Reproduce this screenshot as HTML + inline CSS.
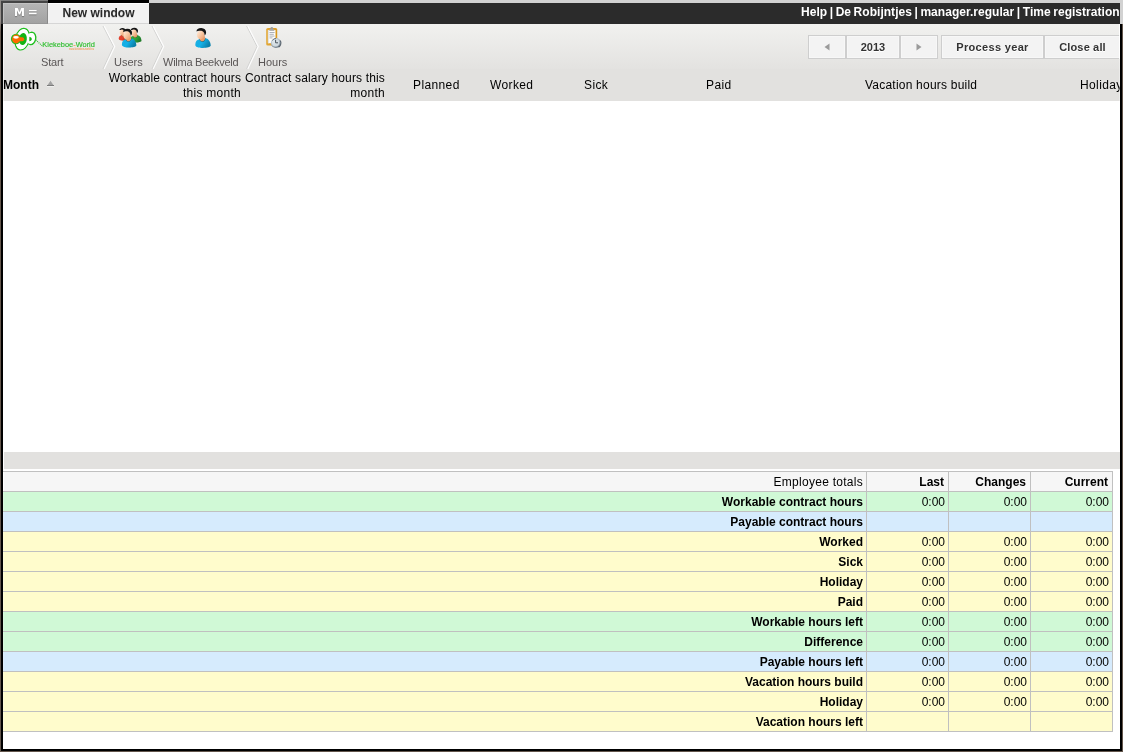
<!DOCTYPE html>
<html><head><meta charset="utf-8"><title>Hours</title>
<style>
html,body{margin:0;padding:0;}
body{width:1123px;height:752px;overflow:hidden;background:#fff;font-family:"Liberation Sans",Arial,sans-serif;font-size:12px;color:#000;position:relative;}
.abs{position:absolute;}
.crumb,.h,.h2,.btn,#tab,#mBtn,#topText,table{will-change:transform;}
#frameL0{left:0;top:0;width:1px;height:752px;background:linear-gradient(#8e8a86 0,#9a9490 20px,#6a5e54 32px,#63564c 110px,#63564c 100%);}
#frameL{left:1px;top:24px;width:2px;height:728px;background:#000;}
#frameR{left:1120px;top:24px;width:2px;height:728px;background:#000;}
#frameR0{left:1122px;top:24px;width:1px;height:728px;background:#63564c;}
#frameB{left:1px;top:749px;width:1121px;height:2px;background:#000;}
#frameB0{left:0;top:751px;width:1123px;height:1px;background:#63564c;}
#topGrey{left:149px;top:0;width:974px;height:24px;background:#d2d2d2;}
#topBar{left:149px;top:3px;width:971px;height:21px;background:#2b2b2b;}
#tabBlack{left:48px;top:0;width:101px;height:3px;background:#000;}
#mBorder{left:0;top:0;width:48px;height:24px;background:#444;}
#mTop{left:0;top:0;width:48px;height:1px;background:#7c7c7c;}
#mBtn{left:3px;top:3px;width:45px;height:21px;box-sizing:border-box;background:linear-gradient(#b6b6b6,#a2a2a2);border-right:1px solid #8a8a8a;border-bottom:1px solid #979797;box-shadow:inset 1px 1px 0 #c2c2c2;color:#fff;font-family:"DejaVu Sans","Liberation Sans",sans-serif;font-weight:bold;font-size:11px;line-height:20px;text-align:left;padding-left:11px;text-shadow:0 1px 1px #777;word-spacing:-1px;}
#tab{left:48px;top:3px;width:101px;height:21px;box-sizing:border-box;background:#f2f2f2;border-top:1px solid #fdfdfd;border-bottom:1px solid #d6d6d6;color:#2a2a2a;font-weight:bold;font-size:12px;line-height:18px;text-align:center;text-shadow:0 1px 0 #d8d8d8;}
#topText{right:3px;letter-spacing:0.03px;word-spacing:-0.8px;top:3px;height:21px;line-height:18px;color:#fff;font-weight:bold;font-size:12px;white-space:nowrap;}
#toolbar{left:3px;top:24px;width:1117px;height:46px;background:linear-gradient(#f1f1ef,#e3e2e0);}
#ghead{left:3px;top:69px;width:1117px;height:32px;background:#e2e1df;}
.crumb{top:55px;font-size:11px;color:#5a5656;white-space:nowrap;line-height:14px;}
.h{top:78px;line-height:14px;font-size:12px;white-space:nowrap;letter-spacing:0.38px;}
.h2{top:71px;line-height:15px;font-size:12px;text-align:right;}
.btn{top:35px;height:24px;border:1px solid #cecece;background:#f3f3f3;box-shadow:inset 0 0 0 1px #f7f7f7;font-weight:bold;font-size:11px;color:#333;text-align:center;line-height:22px;box-sizing:border-box;text-shadow:0 1px 0 #fff;white-space:nowrap;}
#band{left:4px;top:452px;width:1116px;height:17px;background:#e2e1df;}
table{position:absolute;left:3px;top:471px;width:1110px;border-collapse:collapse;table-layout:fixed;font-size:12px;}
td{border:1px solid #c0c0c0;height:17px;padding:2px 4px 0 0;text-align:right;line-height:17px;white-space:nowrap;overflow:hidden;}
td.l{font-weight:bold;border-left-color:#fff;padding-right:3px;}
tr.hd td{background:#f6f6f6;font-weight:bold;}
tr.hd td.l{font-weight:normal;letter-spacing:0.27px;}
tr.g td,tr.b td,tr.y td{padding-right:3px;}
tr.g td.l{border-left-color:#daf9df;}tr.b td.l{border-left-color:#deeefd;}tr.y td.l{border-left-color:#fffcd6;}
tr.g td{background:#d0f9d6;}
tr.b td{background:#d6ebfd;}
tr.y td{background:#fffccc;}
</style></head><body>
<div class="abs" id="topGrey"></div>
<div class="abs" id="topBar"></div>
<div class="abs" id="tabBlack"></div>
<div class="abs" id="mBorder"></div>
<div class="abs" id="mTop"></div>
<div class="abs" id="mBtn">M <span style="font-size:12px;line-height:0;position:relative;top:0.3px">=</span></div>
<div class="abs" id="tab">New window</div>
<div class="abs" id="topText">Help | De Robijntjes | manager.regular | Time registration</div>
<div class="abs" id="toolbar"></div>
<div class="abs" id="ghead"></div>

<svg class="abs" id="icons" style="left:0;top:0" width="320" height="72" viewBox="0 0 320 72">
<defs>
<linearGradient id="skin" x1="0" y1="0" x2="1" y2="1"><stop offset="0" stop-color="#fff1e6"/><stop offset="0.45" stop-color="#fbcdaa"/><stop offset="1" stop-color="#e79a68"/></linearGradient>
<linearGradient id="shade" x1="0" y1="0" x2="1" y2="0.4"><stop offset="0" stop-color="#fff" stop-opacity="0.12"/><stop offset="0.5" stop-color="#000" stop-opacity="0"/><stop offset="1" stop-color="#000" stop-opacity="0.28"/></linearGradient>
<linearGradient id="gold" x1="0" y1="0" x2="1" y2="0"><stop offset="0" stop-color="#e2a838"/><stop offset="1" stop-color="#d8981f"/></linearGradient>
<radialGradient id="clk" cx="0.4" cy="0.35" r="0.7"><stop offset="0" stop-color="#e6ecf0"/><stop offset="0.6" stop-color="#b2bec7"/><stop offset="1" stop-color="#5a6874"/></radialGradient>
<g id="person">
 <path d="M0.3 17 C0.4 13.5 1.6 12 4.2 11.3 L6.5 10.6 L10.8 10.3 C13.6 11 15.5 13.6 15.7 17.6 C15.6 19.2 11.5 20 8 20 C4.5 20 0.4 19.2 0.3 17 Z" fill="currentColor"/>
 <path d="M0.3 17 C0.4 13.5 1.6 12 4.2 11.3 L6.5 10.6 L10.8 10.3 C13.6 11 15.5 13.6 15.7 17.6 C15.6 19.2 11.5 20 8 20 C4.5 20 0.4 19.2 0.3 17 Z" fill="url(#shade)"/>
 <path d="M4.3 11.2 C5 13.4 6.5 14 7.6 13.9 C9 13.8 10.3 12.6 10.6 10.2 L9.6 9 L5 10 Z" fill="#3a3020" opacity="0.55"/>
 <path d="M4.8 9.5 L4.9 11.4 C5.6 13 6.6 13.4 7.5 13.3 C8.8 13.2 9.8 12.2 10.1 10.3 L9.6 7.5 Z" fill="#ea9e6c"/>
 <ellipse cx="5.6" cy="6.7" rx="3.7" ry="4.7" fill="url(#skin)"/>
 <path d="M1.5 3.4 C1.3 1.6 3.5 0 6.3 0.1 C9.3 0.2 11.2 2 11.1 4.6 C11 6 10.4 7 9.7 7.6 C9.6 6.2 9.2 4.9 8.5 4 C7.6 3 6.2 2.5 4.4 2.7 C3.2 2.8 2.2 3.1 1.5 3.4 Z" fill="#151515"/>
</g>
</defs>
<!-- chevrons -->
<g fill="none" stroke-linejoin="miter">
 <path d="M103 26 L113.5 46.5 L103 69" stroke="#d2d2d1" stroke-width="1"/>
 <path d="M104.2 26 L114.7 46.5 L104.2 69" stroke="#fdfdfd" stroke-width="1.15"/>
 <path d="M152 26 L162.5 46.5 L152 69" stroke="#d2d2d1" stroke-width="1"/>
 <path d="M153.2 26 L163.7 46.5 L153.2 69" stroke="#fdfdfd" stroke-width="1.15"/>
 <path d="M246.6 26 L257.1 46.5 L246.6 69" stroke="#d2d2d1" stroke-width="1"/>
 <path d="M247.8 26 L258.3 46.5 L247.8 69" stroke="#fdfdfd" stroke-width="1.15"/>
</g>
<!-- logo -->
<g>
 <ellipse cx="22.3" cy="39.2" rx="7" ry="10.9" transform="rotate(14 22.3 39.2)" fill="#fff" stroke="#1fbf1f" stroke-width="1.3"/>
 <ellipse cx="31.4" cy="38.4" rx="4.3" ry="6.2" transform="rotate(10 31.4 38.4)" fill="#fff" stroke="#1fbf1f" stroke-width="1.3"/>
 <ellipse cx="22.3" cy="39.2" rx="6.35" ry="10.25" transform="rotate(14 22.3 39.2)" fill="#fff"/>
 <ellipse cx="30.4" cy="38.4" rx="3.8" ry="5.5" transform="rotate(10 30.4 38.4)" fill="#fff"/>
 <ellipse cx="22.9" cy="39" rx="3.9" ry="6.1" transform="rotate(6 22.9 39)" fill="#14b414"/>
 <path d="M29.4 36.8 C31.2 37.2 31.9 38.2 31.8 39.3 C31.7 40.3 30.8 41 29.3 41.2 Z" fill="#14b414"/>
 <ellipse cx="16" cy="39" rx="5.1" ry="5.3" fill="#1fbf1f"/>
 <rect x="17" y="37.2" width="7.2" height="4" rx="2" fill="#ff6a00"/>
 <ellipse cx="16.1" cy="39" rx="4.1" ry="4.4" fill="#ff6a00"/>
 <ellipse cx="16" cy="37.3" rx="2.8" ry="1.4" fill="#fff"/>
 <path d="M35.8 40 L42.2 45.8" stroke="#2fc02f" stroke-width="1.1" stroke-dasharray="1 0.9" fill="none"/>
 <text x="42.3" y="47.1" font-family="Liberation Sans, sans-serif" font-size="7.6" fill="#2fbe2f" stroke="#2fbe2f" stroke-width="0.15" textLength="52.6" lengthAdjust="spacingAndGlyphs">Kiekeboe<tspan fill="#ff7a1a" stroke="#ff7a1a">-</tspan>World</text>
 <text x="69" y="50.3" font-family="Liberation Sans, sans-serif" font-size="2.6" fill="#f08a3c" textLength="25" lengthAdjust="spacingAndGlyphs">www.kiekeboe-world.nu</text>
</g>
<!-- users -->
<g>
 <use href="#person" transform="translate(118.5 27.9) scale(0.64)" color="#e8402c"/>
 <use href="#person" transform="translate(129.7 27.6) scale(0.75)" color="#2eab3a"/>
 <use href="#person" transform="translate(121.6 28.7) scale(0.94)" color="#12b2ea"/>
</g>
<!-- user -->
<use href="#person" transform="translate(195 28)" color="#12b2ea"/>
<!-- hours -->
<g>
 <rect x="266.2" y="27.9" width="11" height="17.6" rx="1.6" fill="url(#gold)"/>
 <rect x="267.9" y="30" width="7.6" height="13.2" fill="#fdfdfd"/>
 <rect x="267.9" y="30" width="1.2" height="13.2" fill="#e4e4e4"/>
 <path d="M270 30.6 L270.6 27.6 C271 26.8 272.6 26.8 273 27.6 L273.6 30.6 Z" fill="#9c9c9c"/>
 <rect x="269.3" y="29.6" width="5" height="1.4" fill="#b4b4b4"/>
 <g stroke="#a4a8b0" stroke-width="0.9"><path d="M269.5 32.5H274.6M269.5 34.3H273.8M269.5 36.1H274.6M269.5 37.9H272.5"/></g>
 <circle cx="275.9" cy="43" r="5.1" fill="url(#clk)"/>
 <circle cx="275.6" cy="42.8" r="3.7" fill="#dde5ea" opacity="0.7"/>
 <path d="M275.6 42.8 L275.6 39.8 M275.6 42.8 L278 42.8" stroke="#3c4650" stroke-width="0.9" fill="none"/>
 <path d="M272.4 40.6 A4.6 4.6 0 0 1 276 38.3" stroke="#4a5560" stroke-width="0.9" fill="none" opacity="0.8"/>
 <path d="M280.3 40.5 A5 5 0 0 1 278.6 47.2" stroke="#3a4652" stroke-width="1.1" fill="none" opacity="0.75"/>
</g>
</svg>
<div class="abs crumb" style="left:41px;letter-spacing:-0.15px">Start</div>
<div class="abs crumb" style="left:114px">Users</div>
<div class="abs crumb" style="left:163px;letter-spacing:-0.25px">Wilma Beekveld</div>
<div class="abs crumb" style="left:258px">Hours</div>

<div class="abs btn" style="left:808px;width:38px;"><svg class="abs" style="left:15px;top:7px" width="6" height="8" viewBox="0 0 6 8"><path d="M5.5 0.5 L5.5 7.5 L0.5 4 Z" fill="#9a9a9a"/></svg></div>
<div class="abs btn" style="left:846px;width:54px;">2013</div>
<div class="abs btn" style="left:900px;width:38px;"><svg class="abs" style="left:15px;top:7px" width="6" height="8" viewBox="0 0 6 8"><path d="M0.5 0.5 L0.5 7.5 L5.5 4 Z" fill="#9a9a9a"/></svg></div>
<div class="abs btn" style="left:941px;width:103px;letter-spacing:0.33px">Process year</div>
<div class="abs btn" style="left:1044px;width:77px;letter-spacing:0.15px">Close all</div>

<div class="abs h" style="left:3px;font-weight:bold;letter-spacing:0">Month</div>
<svg class="abs" style="left:46px;top:79px" width="10" height="9" viewBox="0 0 10 9"><path d="M1 8 L8 8" stroke="#efefee" stroke-width="1" fill="none" transform="translate(0,-0.5)"/><path d="M1 7 L4.5 1.8 L8 7 Z" fill="#a2a2a2"/><rect x="1" y="6" width="7" height="1" fill="#7c7c7c"/></svg>
<div class="abs h2" style="left:60px;width:181px"><span style="letter-spacing:0.11px">Workable contract hours</span><br><span style="letter-spacing:0.27px">this month</span></div>
<div class="abs h2" style="left:235px;width:150px"><span style="letter-spacing:0.15px">Contract salary hours this</span><br><span style="letter-spacing:0.3px">month</span></div>
<div class="abs h" style="left:413px">Planned</div>
<div class="abs h" style="left:490px">Worked</div>
<div class="abs h" style="left:584px">Sick</div>
<div class="abs h" style="left:706px">Paid</div>
<div class="abs h" style="left:865px;letter-spacing:0.22px">Vacation hours build</div>
<div class="abs h" style="left:1080px">Holiday</div>

<div class="abs" id="band"></div>
<table>
<colgroup><col style="width:863px"><col style="width:82px"><col style="width:82px"><col style="width:82px"></colgroup>
<tr class="hd"><td class="l">Employee totals</td><td>Last</td><td>Changes</td><td>Current</td></tr>
<tr class="g"><td class="l">Workable contract hours</td><td>0:00</td><td>0:00</td><td>0:00</td></tr>
<tr class="b"><td class="l">Payable contract hours</td><td></td><td></td><td></td></tr>
<tr class="y"><td class="l">Worked</td><td>0:00</td><td>0:00</td><td>0:00</td></tr>
<tr class="y"><td class="l">Sick</td><td>0:00</td><td>0:00</td><td>0:00</td></tr>
<tr class="y"><td class="l">Holiday</td><td>0:00</td><td>0:00</td><td>0:00</td></tr>
<tr class="y"><td class="l">Paid</td><td>0:00</td><td>0:00</td><td>0:00</td></tr>
<tr class="g"><td class="l">Workable hours left</td><td>0:00</td><td>0:00</td><td>0:00</td></tr>
<tr class="g"><td class="l">Difference</td><td>0:00</td><td>0:00</td><td>0:00</td></tr>
<tr class="b"><td class="l">Payable hours left</td><td>0:00</td><td>0:00</td><td>0:00</td></tr>
<tr class="y"><td class="l">Vacation hours build</td><td>0:00</td><td>0:00</td><td>0:00</td></tr>
<tr class="y"><td class="l">Holiday</td><td>0:00</td><td>0:00</td><td>0:00</td></tr>
<tr class="y"><td class="l">Vacation hours left</td><td></td><td></td><td></td></tr>
</table>

<div class="abs" style="left:3px;top:24px;width:1px;height:77px;background:rgba(255,255,255,0.55)"></div>
<div class="abs" style="left:1119px;top:24px;width:1px;height:35px;background:rgba(255,255,255,0.9)"></div>
<div class="abs" style="left:1119px;top:59px;width:1px;height:42px;background:rgba(255,255,255,0.35)"></div>
<div class="abs" id="frameL0"></div>
<div class="abs" id="frameL"></div>
<div class="abs" id="frameR"></div>
<div class="abs" id="frameR0"></div>
<div class="abs" id="frameB"></div>
<div class="abs" id="frameB0"></div>
</body></html>
